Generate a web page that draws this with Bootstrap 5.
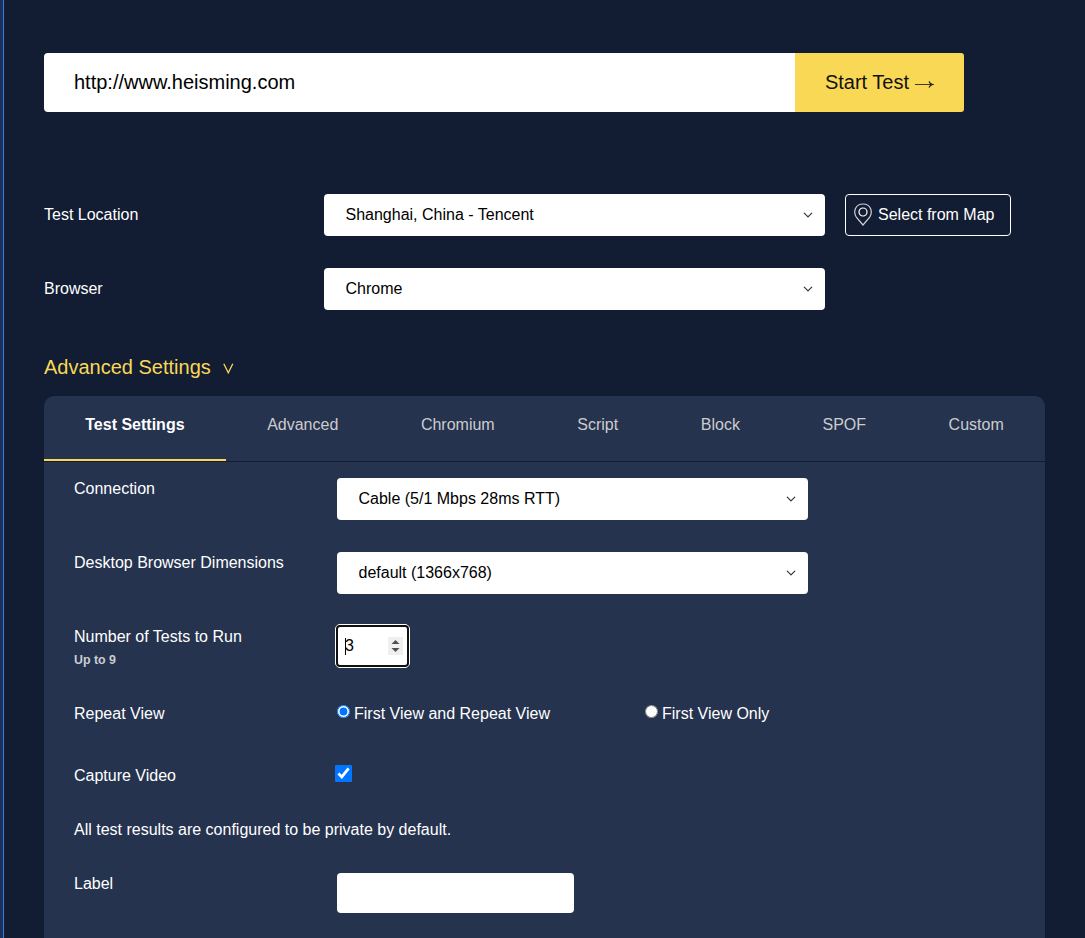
<!DOCTYPE html>
<html lang="en">
<head>
<meta charset="utf-8">
<meta name="viewport" content="width=device-width, initial-scale=1">
<title>Start a test</title>
<link href="https://cdn.jsdelivr.net/npm/bootstrap@5.3.0/dist/css/bootstrap.min.css" rel="stylesheet">
<style>
body{font-family:"Liberation Sans",Arial,sans-serif;font-size:16px;line-height:20px;background:#121c33;color:#fff;height:938px;overflow:hidden}
.page-edge{width:4px;background:#1b3157;border-right:1px solid #3b7edc}
.page-main{padding:53px 0 0 40px;width:1041px}
.url-form{width:920px;height:59px;font-size:20px;border-radius:3px}
.url-input{border:0;padding:0 30px;color:#000;background:#fff;outline:0}
.start-btn{width:169px;background:#f9d856;color:#111;font-size:20px;border:0;border-radius:0 3px 3px 0;padding:0 0 2px}
.start-btn:hover{background:#f9d856;color:#111}
.setting-top{margin-top:82px}
.setting{height:74px}
.setting-top .setting-label{width:280px;padding-top:11px}
.setting-top .pick{width:501px}
.pick{width:471px;height:42px;border:0;border-radius:4px;color:#000;font-size:16px;line-height:20px;padding:11px 40px 11px 21.5px;background-size:10px 10px;background-position:right 12px center}
.map-btn{width:166px;height:42px;margin-left:20px;border:1px solid #fff;border-radius:4px;color:#fff;padding:0 0 1px 8px}
.map-text{margin-left:6px}
.adv-title{color:#f9d856;font-size:20px;line-height:24px;margin-top:13px;height:41px}
.adv-title svg{margin:1px 0 0 12px}
.panel{background:#25334f;border-radius:10px 10px 0 0;height:560px}
.tabs{height:66px;border-bottom:1px solid #131c34}
.tabs .nav-link{color:#ccc;padding:19px 0 0;height:65px;border-radius:0;border-bottom:2px solid transparent}
.tabs .nav-link.active{color:#fff;font-weight:700;border-color:#f9d856;background:none}
.fields{padding:16px 30px 0}
.fields .setting-label{width:263px;padding-top:1px}
.hint{font-size:12.4px;font-weight:700;color:#c8ccd3;line-height:16px;margin-top:5px}
.count-box{width:75px;height:44px;margin:-2px 0 0 -2px;border:1px solid #fff;border-radius:5px;background:#fff}
.count-inner{border:2px solid #101010;border-radius:4px;background:#fff;color:#000;padding:0 4px 0 7px}
.caret{width:1px;height:17px;background:#000}
.count-num{margin-left:-1px}
.choice{width:308px;padding-top:1px}
.choice input,.fields input[type=checkbox]{accent-color:#0075ff}
.choice input{width:13px;height:13px;margin:1px 4px 0 0}
.video-check{width:17px;height:17px;margin-left:-2px}
.r-runs{height:77px}
.r-repeat{height:62px}
.r-line{height:54px}
.r-note{padding-top:1px}
.label-input{width:237px;height:40px;border:0;border-radius:4px;background:#fff}
</style>
</head>
<body class="d-flex">
<div class="page-edge flex-shrink-0"></div>
<main class="page-main flex-shrink-0">
  <form class="url-form d-flex">
    <input class="url-input flex-grow-1 rounded-start-1" aria-label="URL" value="http://www.heisming.com">
    <button type="button" class="btn start-btn d-flex align-items-center justify-content-center">Start Test
      <svg width="21" height="12" viewBox="0 0 21 12" fill="none" stroke="#111" class="ms-1 mt-1"><path d="M2 6.5h16" stroke-width=".8"/><path d="M16 3.5Q17 5.8 19.5 6.5Q17 7.2 16 9.5" stroke-width="1.2"/></svg>
    </button>
  </form>
  <section class="setting-top">
    <div class="setting d-flex align-items-start">
      <label class="setting-label">Test Location</label>
      <select class="form-select pick"><option>Shanghai, China - Tencent</option></select>
      <button type="button" class="btn map-btn d-flex align-items-center">
        <svg width="18" height="23" viewBox="0 0 18 23" fill="none" stroke="#fff"><path d="M9 22L2.5 14.5C-1.4 8.5 1.5 1 9 1S19.4 8.5 15.5 14.5Z" stroke-width="1.2" stroke-opacity=".8"/><circle cx="9" cy="9" r="4" stroke-width="1.2"/></svg>
        <span class="map-text">Select from Map</span>
      </button>
    </div>
    <div class="setting d-flex align-items-start">
      <label class="setting-label">Browser</label>
      <select class="form-select pick"><option>Chrome</option></select>
    </div>
  </section>
  <div class="adv-title d-flex"><span>Advanced Settings</span><svg width="12" height="24" viewBox="0 0 12 24" fill="none" stroke="#f9d856" stroke-width="1.3"><path d="M.8 7.8L5.3 16.8L9.8 7.8"/></svg></div>
  <section class="panel">
    <ul class="nav nav-fill tabs flex-nowrap">
      <li class="nav-item"><a class="nav-link active">Test Settings</a></li>
      <li class="nav-item"><a class="nav-link">Advanced</a></li>
      <li class="nav-item"><a class="nav-link">Chromium</a></li>
      <li class="nav-item"><a class="nav-link">Script</a></li>
      <li class="nav-item"><a class="nav-link">Block</a></li>
      <li class="nav-item"><a class="nav-link">SPOF</a></li>
      <li class="nav-item"><a class="nav-link">Custom</a></li>
    </ul>
    <div class="fields">
      <div class="setting d-flex align-items-start">
        <label class="setting-label">Connection</label>
        <select class="form-select pick"><option>Cable (5/1 Mbps 28ms RTT)</option></select>
      </div>
      <div class="setting d-flex align-items-start">
        <label class="setting-label">Desktop Browser Dimensions</label>
        <select class="form-select pick"><option>default (1366x768)</option></select>
      </div>
      <div class="r-runs d-flex align-items-start">
        <div class="setting-label">Number of Tests to Run<div class="hint">Up to 9</div></div>
        <div class="count-box d-flex"><div class="count-inner w-100 d-flex align-items-center">
          <span class="caret"></span><span class="count-num">3</span>
          <svg class="ms-auto" width="15" height="18" viewBox="0 0 15 18"><path fill="#efefef" d="M0 0h15v18H0z"/><path fill="#505050" d="M3.5 7L7.5 3L11.5 7ZM3.5 11L7.5 15L11.5 11Z"/></svg>
        </div></div>
      </div>
      <div class="r-repeat d-flex align-items-start">
        <div class="setting-label">Repeat View</div>
        <label class="choice d-flex align-items-start"><input type="radio" name="rv" checked>First View and Repeat View</label>
        <label class="choice d-flex align-items-start"><input type="radio" name="rv">First View Only</label>
      </div>
      <div class="r-line d-flex align-items-start">
        <div class="setting-label">Capture Video</div>
        <input type="checkbox" class="video-check" checked aria-label="Capture Video">
      </div>
      <div class="r-line r-note">All test results are configured to be private by default.</div>
      <div class="d-flex align-items-start">
        <label class="setting-label">Label</label>
        <input class="label-input" aria-label="Label">
      </div>
    </div>
  </section>
</main>
<script src="https://cdn.jsdelivr.net/npm/bootstrap@5.3.0/dist/js/bootstrap.bundle.min.js"></script>
</body>
</html>
